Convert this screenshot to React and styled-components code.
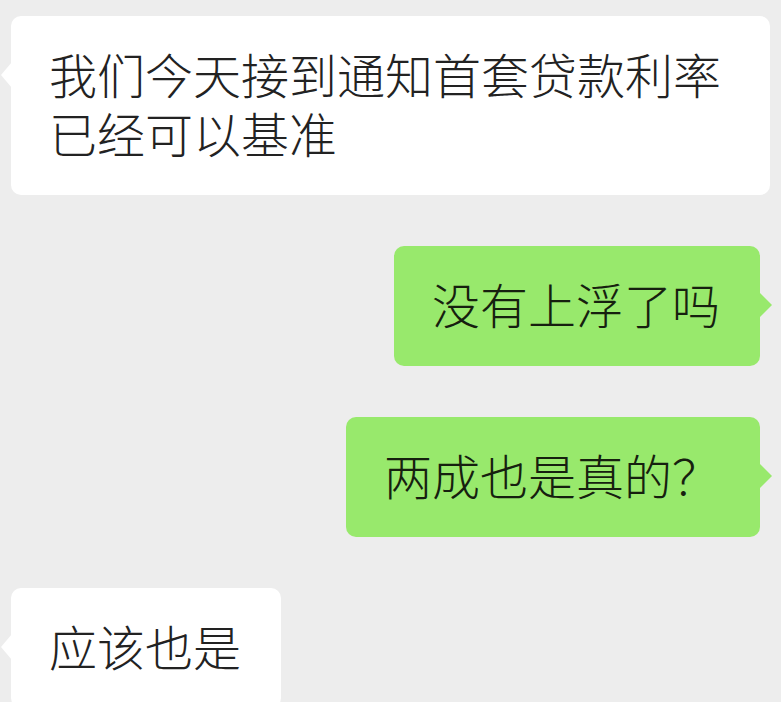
import styled, { createGlobalStyle } from 'styled-components'

const GlobalStyle = createGlobalStyle`
  html, body {
    margin: 0;
    background-color: #ededed;
    overflow: hidden;
  }
`

const Chat = styled.div`
  display: flex;
  flex-direction: column;
  gap: 51px;
  padding: 16px 0 40px;
  font-family: "Noto Sans CJK SC", "Noto Sans", sans-serif;
`

const Row = styled.div`
  display: flex;
  justify-content: ${props => (props.$mine ? 'flex-end' : 'flex-start')};
  padding: ${props => (props.$mine ? '0 21px 0 0' : '0 0 0 11px')};
`

const Bubble = styled.div`
  position: relative;
  box-sizing: border-box;
  max-width: 759px;
  padding: 28px 40px 33px 38px;
  border-radius: 10px;
  background-color: ${props => (props.$mine ? '#98e96c' : '#ffffff')};
  color: ${props => (props.$mine ? '#16200f' : '#222222')};
  font-size: 48px;
  font-weight: 300;
  line-height: 59px;

  &::before {
    content: '';
    position: absolute;
    top: 46px;
    width: 0;
    height: 0;
    border-top: 13px solid transparent;
    border-bottom: 13px solid transparent;
    ${props =>
      props.$mine
        ? `right: -12px; border-left: 13px solid #98e96c;`
        : `left: -10px; border-right: 11px solid #ffffff;`}
  }
`

const messages = [
  { mine: false, text: '我们今天接到通知首套贷款利率已经可以基准' },
  { mine: true, text: '没有上浮了吗' },
  { mine: true, text: '两成也是真的？' },
  { mine: false, text: '应该也是' },
]

const App = () => {
  return (
    <>
      <GlobalStyle />
      <Chat>
        {messages.map((m, i) => (
          <Row key={i} $mine={m.mine}>
            <Bubble $mine={m.mine}>{m.text}</Bubble>
          </Row>
        ))}
      </Chat>
    </>
  )
}

export default App
